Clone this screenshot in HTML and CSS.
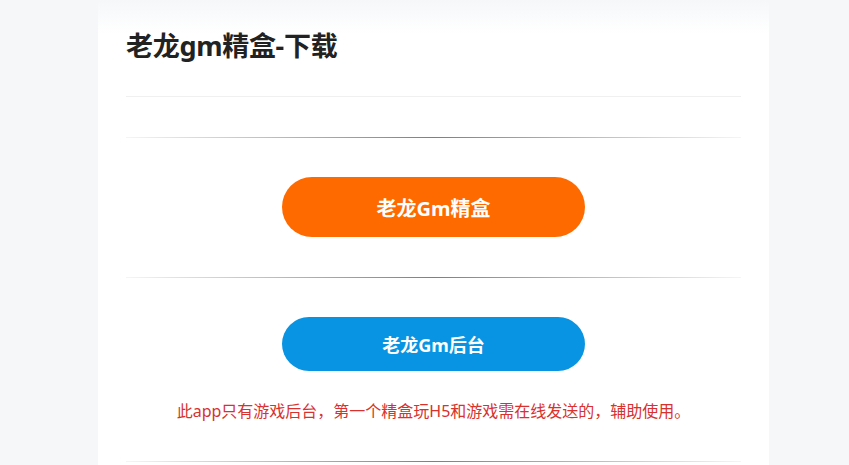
FILE: index.html
```html
<!DOCTYPE html>
<html lang="zh-CN">
<head>
<meta charset="utf-8">
<title>老龙gm精盒-下载</title>
<link rel="stylesheet" href="styles.css">
</head>
<body>
<div class="page">
  <main class="card">
    <header class="head">
      <h1 class="title">老龙gm精盒-下载</h1>
    </header>
    <hr class="line">
    <section class="block">
      <a class="btn btn-orange" href="#">老龙Gm精盒</a>
    </section>
    <hr class="line">
    <section class="block block-last">
      <a class="btn btn-blue" href="#">老龙Gm后台</a>
      <p class="note">此app只有游戏后台，第一个精盒玩H5和游戏需在线发送的，辅助使用。</p>
    </section>
    <hr class="line">
  </main>
</div>
</body>
</html>
```

FILE: styles.css
```css
html, body {
  margin: 0;
  padding: 0;
  height: 100%;
}
body {
  background: #f6f7f9;
  font-family: "Noto Sans", "Noto Sans CJK SC", sans-serif;
  overflow: hidden;
}
.page {
  padding-left: 98px;
  width: 671px;
}
.card {
  background: linear-gradient(to bottom, #f5f7f9 0, #ffffff 34px);
  padding: 0 28px;
  min-height: 465px;
  box-sizing: border-box;
  border-radius: 3px 3px 0 0;
}
.head {
  height: 97px;
  border-bottom: 1px solid #f0f0f0;
  box-sizing: border-box;
  padding-top: 26px;
}
.title {
  margin: 0;
  font-size: 27px;
  line-height: 40px;
  font-weight: 700;
  color: #222;
  letter-spacing: -0.3px;
}
.line {
  margin: 40px 0 0;
  border: 0;
  height: 1px;
  background: linear-gradient(to right, rgba(0,0,0,0.04), rgba(0,0,0,0.5), rgba(0,0,0,0.04));
}
.block {
  display: flex;
  flex-direction: column;
  align-items: center;
  padding-top: 39px;
}
.btn {
  display: flex;
  align-items: center;
  justify-content: center;
  width: 303px;
  color: #fff;
  font-weight: 700;
  text-decoration: none;
  border-radius: 30px;
}
.btn-orange {
  height: 60px;
  background: #ff6a00;
  font-size: 20px;
}
.btn-blue {
  height: 54px;
  background: #0894e2;
  font-size: 18px;
}
.note {
  margin: 29px 0 0;
  font-size: 16px;
  line-height: 22px;
  color: #d8312e;
}
.block-last + .line {
  margin-top: 39px;
}
```
